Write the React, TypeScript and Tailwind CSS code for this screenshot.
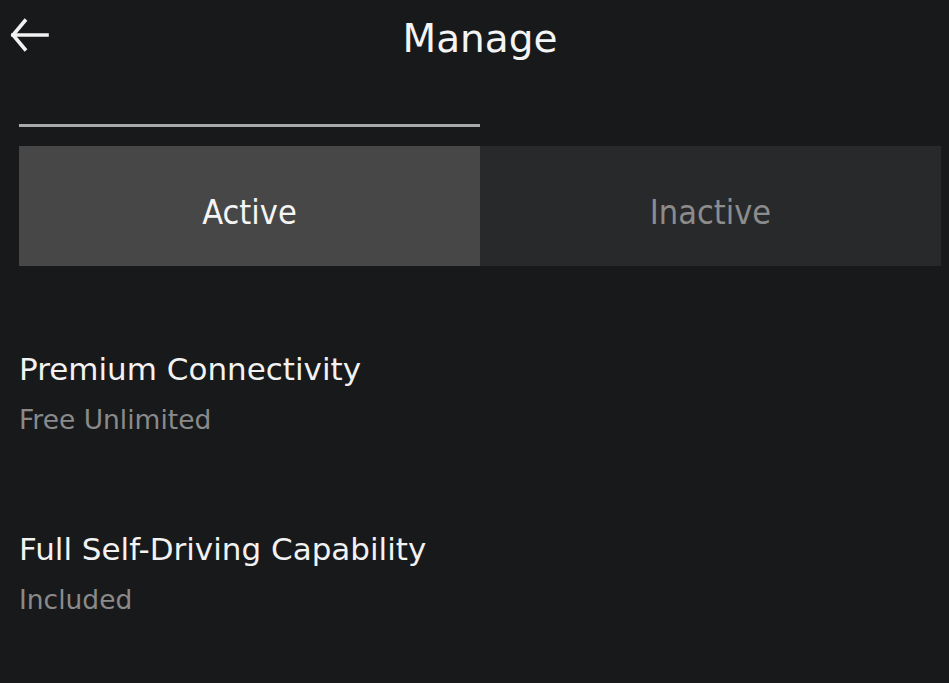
import React from "react";

export default function App() {
  return (
    <div
      className="w-[949px] h-[683px] overflow-hidden bg-[#18191b] text-white"
      style={{ fontFamily: '"DejaVu Sans", sans-serif' }}
    >
      <div className="pl-[19px] pr-[8px] pt-[19px]">
        <div className="grid grid-cols-[1fr_auto_1fr] items-start h-[39px]">
          <div className="-ml-[9px] -mt-[1px]">
            <svg width="40" height="40" viewBox="0 0 40 40" fill="none" stroke="#f2f2f2" strokeWidth="3.6" strokeLinecap="square" strokeLinejoin="miter">
              <path d="M3 17 H37" />
              <path d="M16 1.5 L3 17 L16 32.5" strokeLinecap="butt" />
            </svg>
          </div>
          <div className="text-[39px] leading-[39px] text-[#f4f4f4]">Manage</div>
          <div />
        </div>

        <div className="mt-[66px] h-[3px] w-[461px] bg-[#a9a9a9]" />

        <div
          className="mt-[19px] grid grid-cols-2 h-[120px] text-[34px] leading-[34px]"
          style={{ fontFamily: '"DejaVu Sans Condensed", "DejaVu Sans", sans-serif', fontStretch: "condensed" }}
        >
          <div className="bg-[#474747] flex justify-center pt-[49px] text-[#f5f5f5]">Active</div>
          <div className="bg-[#28292b] flex justify-center pt-[49px] text-[#8c8c8c]">Inactive</div>
        </div>

        <div className="mt-[88px] flex flex-col">
          <div className="text-[31px] leading-[31px] text-[#f2f2f2]">Premium Connectivity</div>
          <div className="mt-[22px] text-[26.5px] leading-[26px] text-[#8a8a8a]">Free Unlimited</div>
          <div className="mt-[101px] text-[31px] leading-[31px] text-[#f2f2f2]">Full Self-Driving Capability</div>
          <div className="mt-[22px] text-[26.5px] leading-[26px] text-[#8a8a8a]">Included</div>
        </div>
      </div>
    </div>
  );
}
